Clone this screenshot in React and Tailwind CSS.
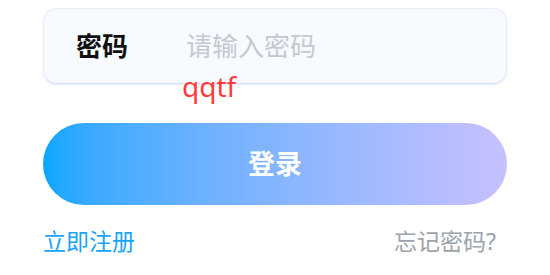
export default function App() {
  const font = { fontFamily: '"Noto Sans", "Noto Sans CJK SC", sans-serif' };
  return (
    <div className="w-[550px] h-[275px] bg-white px-[43px] pt-[8px] overflow-hidden" style={font}>
      <div className="h-[76px] rounded-[14px] bg-[#f7fbff] border border-[#e6eefa] border-b-[#d6e2f5] shadow-[0_1px_2px_rgba(150,180,230,0.25)] flex items-center pl-[32px]">
        <span className="w-[110px] text-[26px] font-bold text-[#111] leading-none">密码</span>
        <span className="text-[26px] text-[#c4c9d1] leading-none">请输入密码</span>
      </div>
      <div className="pl-[139px] -mt-[14px] text-[28px] leading-[32px] text-[#ff3b3b] h-[32px]">qqtf</div>
      <button className="mt-[21px] w-full h-[82px] rounded-full bg-linear-to-r from-[#02a7ff] to-[#c7c0ff] text-white text-[27px] font-bold flex items-center justify-center">
        登录
      </button>
      <div className="mt-[22px] flex justify-between items-center pr-[11px]">
        <span className="text-[23px] leading-[28px] text-[#1aa4f5]">立即注册</span>
        <span className="text-[23px] leading-[28px] text-[#9da3ab]">忘记密码?</span>
      </div>
    </div>
  );
}
